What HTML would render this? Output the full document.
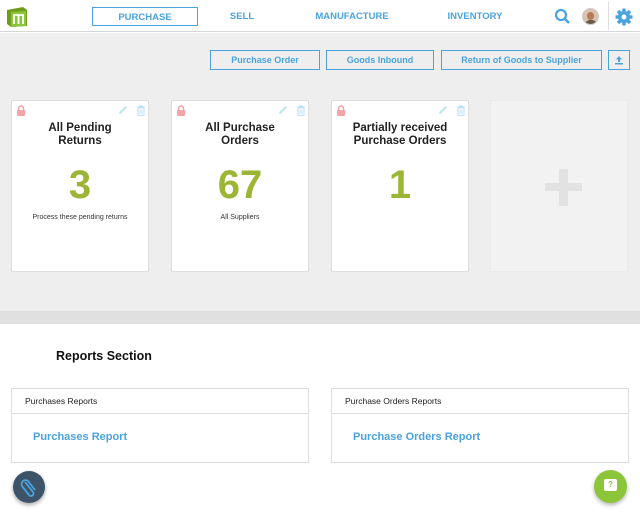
<!DOCTYPE html>
<html><head><style>
*{box-sizing:border-box;margin:0;padding:0}
body{width:640px;height:514px;overflow:hidden;font-family:"Liberation Sans",sans-serif;background:#fff;position:relative}
.hdr{position:absolute;left:0;top:0;width:640px;height:32px;background:#fff;border-bottom:1px solid #d6d6d6}
.nav{position:absolute;top:7px;height:19px;font-size:9.5px;font-weight:bold;color:#4aa3df;line-height:19px;text-align:center}
.gray{position:absolute;left:0;top:33px;width:640px;height:278px;background:#eee}
.band{position:absolute;left:0;top:311px;width:640px;height:13px;background:#e0e0e0}
.btn{position:absolute;top:50px;height:20px;border:1px solid #4aa3df;background:#eee;color:#4aa3df;font-size:9px;font-weight:bold;text-align:center;line-height:18px}
.card{position:absolute;top:100px;width:138px;height:172px;background:#fff;border:1px solid #ddd;text-align:center}
.card h3{font-size:11.5px;color:#222;font-weight:bold;line-height:13px;margin-top:21px}
.num{font-size:40px;font-weight:bold;color:#9bb534;margin-top:17px;line-height:40px}
.sub{font-size:7px;color:#333;margin-top:9px}
.lock{position:absolute;left:4px;top:4px}
.ic{position:absolute;top:4px}
.rep{position:absolute;top:388px;width:298px;height:75px;border:1px solid #ddd;background:#fff}
.rep .t{height:25px;border-bottom:1px solid #ddd;font-size:8.5px;color:#222;padding:7px 0 0 13px}
.rep .l{font-size:11px;font-weight:bold;color:#4aa3df;padding:17px 0 0 21px}
</style></head><body>
<div class="hdr">
<svg style="position:absolute;left:6px;top:7px" width="22" height="20" viewBox="0 0 22 20"><path d="M1 3 L17 0 L21 3 L21 19 L5 20 L1 17Z" fill="#6f9c1f"/><path d="M5 5 L20 4 L20 19 L5 20Z" fill="#8cc43a"/><path d="M8 17 V8 H17 V17 M12.5 8 V17" stroke="#fff" stroke-width="1.8" fill="none"/></svg>
<div class="nav" style="left:92px;width:106px;border:1px solid #4aa3df">PURCHASE</div>
<div class="nav" style="left:222px;width:40px">SELL</div>
<div class="nav" style="left:307px;width:90px">MANUFACTURE</div>
<div class="nav" style="left:440px;width:70px">INVENTORY</div>
<svg style="position:absolute;left:554px;top:8px" width="17" height="17" viewBox="0 0 17 17"><circle cx="7" cy="7" r="5" stroke="#4aa3df" stroke-width="2.2" fill="none"/><path d="M10.5 10.5 L15 15" stroke="#4aa3df" stroke-width="2.6"/></svg>
<div style="position:absolute;left:582px;top:8px;width:17px;height:17px;border-radius:50%;background:#d9c2b0;border:1px solid #ccc;overflow:hidden"><div style="margin:3px auto 0;width:7px;height:8px;border-radius:50%;background:#b57b5a"></div><div style="margin:0 auto;width:12px;height:6px;background:#6b5a4a;border-radius:5px 5px 0 0"></div></div>
<div style="position:absolute;left:608px;top:2px;width:1px;height:28px;background:#ddd"></div>
<svg style="position:absolute;left:615px;top:8px" width="18" height="18" viewBox="0 0 18 18"><g fill="#4aa3df"><circle cx="9" cy="9" r="6"/><rect x="7.3" y="0.5" width="3.4" height="17"/><rect x="0.5" y="7.3" width="17" height="3.4"/><rect x="7.3" y="0.5" width="3.4" height="17" transform="rotate(45 9 9)"/><rect x="7.3" y="0.5" width="3.4" height="17" transform="rotate(-45 9 9)"/></g><circle cx="9" cy="9" r="2.5" fill="#fff"/></svg>
</div>
<div class="gray"></div>
<div class="band"></div>
<div class="btn" style="left:210px;width:110px">Purchase Order</div>
<div class="btn" style="left:326px;width:108px">Goods Inbound</div>
<div class="btn" style="left:441px;width:161px">Return of Goods to Supplier</div>
<div class="btn" style="left:608px;width:22px"><svg width="10" height="10" viewBox="0 0 10 10" style="margin-top:4px"><path d="M5 1 L2 4.5 H4 V7 H6 V4.5 H8Z M1 8 H9 V9.5 H1Z" fill="#4aa3df"/></svg></div>

<div class="card" style="left:11px">
<svg class="lock" width="10" height="11" viewBox="0 0 10 11"><path d="M2.5 5 V3.5 A2.5 2.5 0 0 1 7.5 3.5 V5" stroke="#f7a3a3" stroke-width="1.5" fill="none"/><rect x="1" y="5" width="8" height="6" rx="1" fill="#f7a3a3"/></svg>
<svg class="ic" style="left:106px" width="10" height="10" viewBox="0 0 10 10"><path d="M1 9 L1.5 7 L7.5 1 L9 2.5 L3 8.5Z" fill="#bfe0f5"/></svg>
<svg class="ic" style="left:124px" width="10" height="11" viewBox="0 0 10 11"><path d="M1 2 H9 M3.5 2 V1 H6.5 V2 M2 3 H8 V10.5 H2Z M4 4.5 V9 M6 4.5 V9" stroke="#bfe0f5" stroke-width="1.1" fill="none"/></svg>
<h3>All Pending<br>Returns</h3><div class="num">3</div><div class="sub">Process these pending returns</div></div>

<div class="card" style="left:171px">
<svg class="lock" width="10" height="11" viewBox="0 0 10 11"><path d="M2.5 5 V3.5 A2.5 2.5 0 0 1 7.5 3.5 V5" stroke="#f7a3a3" stroke-width="1.5" fill="none"/><rect x="1" y="5" width="8" height="6" rx="1" fill="#f7a3a3"/></svg>
<svg class="ic" style="left:106px" width="10" height="10" viewBox="0 0 10 10"><path d="M1 9 L1.5 7 L7.5 1 L9 2.5 L3 8.5Z" fill="#bfe0f5"/></svg>
<svg class="ic" style="left:124px" width="10" height="11" viewBox="0 0 10 11"><path d="M1 2 H9 M3.5 2 V1 H6.5 V2 M2 3 H8 V10.5 H2Z M4 4.5 V9 M6 4.5 V9" stroke="#bfe0f5" stroke-width="1.1" fill="none"/></svg>
<h3>All Purchase<br>Orders</h3><div class="num">67</div><div class="sub">All Suppliers</div></div>

<div class="card" style="left:331px">
<svg class="lock" width="10" height="11" viewBox="0 0 10 11"><path d="M2.5 5 V3.5 A2.5 2.5 0 0 1 7.5 3.5 V5" stroke="#f7a3a3" stroke-width="1.5" fill="none"/><rect x="1" y="5" width="8" height="6" rx="1" fill="#f7a3a3"/></svg>
<svg class="ic" style="left:106px" width="10" height="10" viewBox="0 0 10 10"><path d="M1 9 L1.5 7 L7.5 1 L9 2.5 L3 8.5Z" fill="#bfe0f5"/></svg>
<svg class="ic" style="left:124px" width="10" height="11" viewBox="0 0 10 11"><path d="M1 2 H9 M3.5 2 V1 H6.5 V2 M2 3 H8 V10.5 H2Z M4 4.5 V9 M6 4.5 V9" stroke="#bfe0f5" stroke-width="1.1" fill="none"/></svg>
<h3>Partially received<br>Purchase Orders</h3><div class="num">1</div></div>

<div style="position:absolute;left:490px;top:100px;width:138px;height:172px;background:#f2f2f2;border:1px dotted #e4e4e4">
<div style="position:absolute;left:54px;top:82px;width:37px;height:8px;background:#e2e2e2"></div>
<div style="position:absolute;left:68px;top:68px;width:9px;height:37px;background:#e2e2e2"></div></div>

<div style="position:absolute;left:56px;top:349px;font-size:12.5px;font-weight:bold;color:#111">Reports Section</div>
<div class="rep" style="left:11px"><div class="t">Purchases Reports</div><div class="l">Purchases Report</div></div>
<div class="rep" style="left:331px"><div class="t">Purchase Orders Reports</div><div class="l">Purchase Orders Report</div></div>

<div style="position:absolute;left:13px;top:471px;width:32px;height:32px;border-radius:50%;background:#3d5468;box-shadow:0 2px 4px rgba(0,0,0,.35)">
<svg width="32" height="32" viewBox="0 0 32 32"><path d="M12 11 L20 21 A2.5 2.5 0 0 1 16 24 L9 15 A4 4 0 0 1 15 10 L22 19" stroke="#4aa3df" stroke-width="1.8" fill="none"/></svg></div>
<div style="position:absolute;left:594px;top:470px;width:33px;height:33px;border-radius:50%;background:#8cc43a;box-shadow:0 2px 4px rgba(0,0,0,.3)">
<div style="position:absolute;left:10px;top:9px;width:13px;height:12px;background:#fff;border-radius:2px;font-size:8px;font-weight:bold;color:#8cc43a;text-align:center;line-height:12px">?</div></div>
</body></html>
